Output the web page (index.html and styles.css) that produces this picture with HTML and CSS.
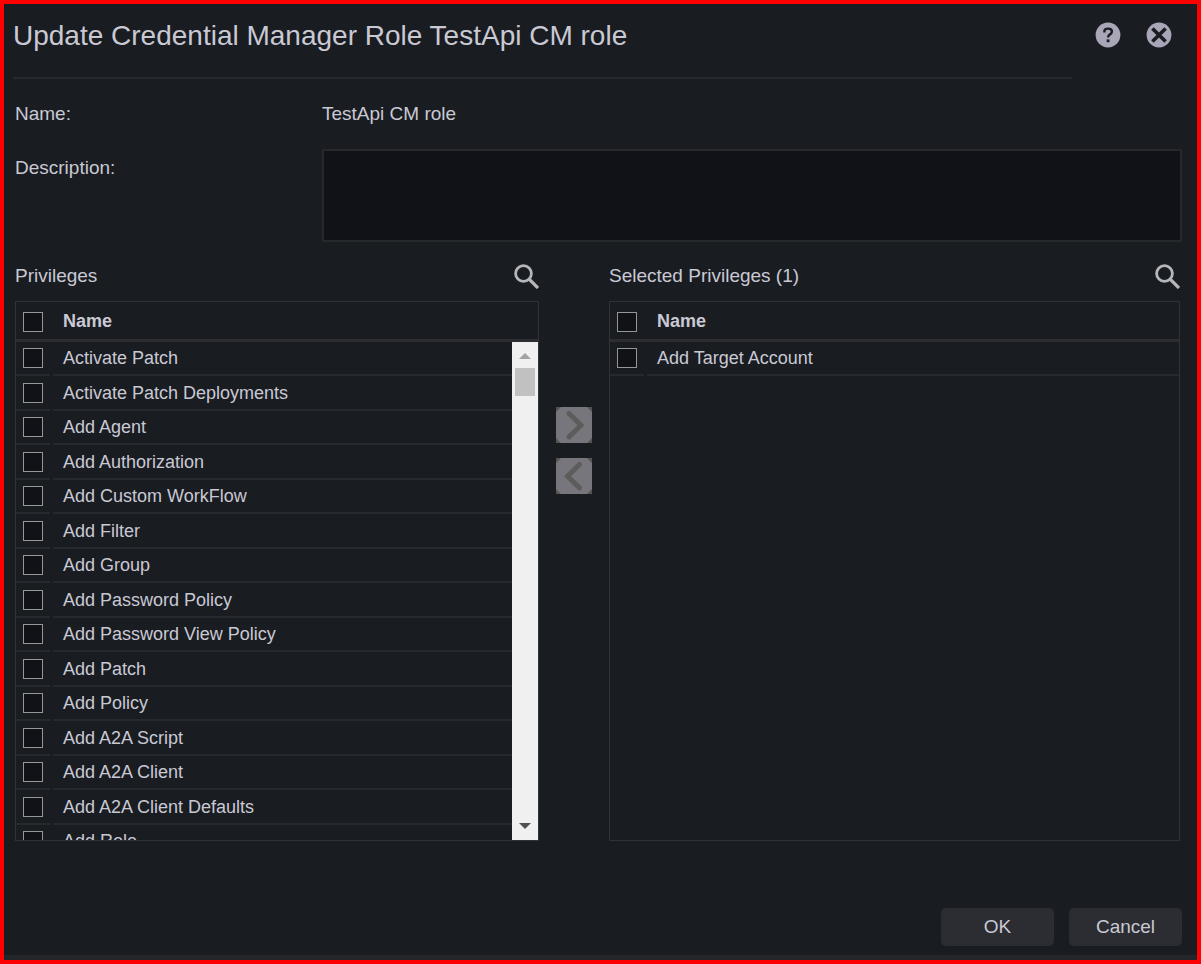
FILE: index.html
```html
<!DOCTYPE html>
<html lang="en">
<head>
<meta charset="utf-8">
<meta name="viewport" content="width=device-width, initial-scale=1">
<title>Update Credential Manager Role</title>
<link rel="stylesheet" href="styles.css">
</head>
<body>
<main class="dialog">
  <header class="dialog-header">
    <h1 class="title">Update Credential Manager Role TestApi CM role</h1>
    <div class="header-actions">
      <button class="icon-button" type="button" aria-label="Help">
        <svg width="26" height="26" viewBox="0 0 26 26"><circle cx="13" cy="13" r="12.4" fill="#a9a7b7"/><path d="M9.4 10.4V8.7Q9.8 6.6 13 6.6q3.9 0 3.9 3 0 1.8-1.9 2.8-1.9 1-1.9 3.1" fill="none" stroke="#191c21" stroke-width="2.4"/><rect x="11.7" y="17.4" width="2.8" height="2.8" fill="#191c21"/></svg>
      </button>
      <button class="icon-button" type="button" aria-label="Close">
        <svg width="26" height="26" viewBox="0 0 26 26"><circle cx="13" cy="13" r="12.4" fill="#a9a7b7"/><path d="M6.4 6.4l13.2 13.2M19.6 6.4L6.4 19.6" fill="none" stroke="#191c21" stroke-width="3.6"/></svg>
      </button>
    </div>
  </header>

  <form class="form">
    <div class="field">
      <span class="field-label">Name:</span>
      <span class="field-value">TestApi CM role</span>
    </div>
    <div class="field">
      <label class="field-label" for="description">Description:</label>
      <textarea class="description" id="description"></textarea>
    </div>

    <div class="picker">
      <section class="panel">
        <div class="panel-header">
          <h2 class="panel-title">Privileges</h2>
          <button class="icon-button" type="button" aria-label="Search privileges">
            <svg width="26" height="26" viewBox="0 0 26 26"><circle cx="10.5" cy="10.5" r="7.9" fill="none" stroke="#b5b6ba" stroke-width="2.8"/><path d="M16 16l9 9" fill="none" stroke="#b5b6ba" stroke-width="3.2"/></svg>
          </button>
        </div>
        <div class="grid">
          <table class="table">
            <thead class="table-head">
              <tr class="row"><th class="check-cell"><input class="check" type="checkbox" aria-label="Select all privileges"></th><th class="name-cell">Name</th></tr>
            </thead>
            <tbody class="table-body">
              <tr class="row"><td class="check-cell"><input class="check" type="checkbox" id="p1"></td><td class="name-cell"><label for="p1">Activate Patch</label></td></tr>
              <tr class="row"><td class="check-cell"><input class="check" type="checkbox" id="p2"></td><td class="name-cell"><label for="p2">Activate Patch Deployments</label></td></tr>
              <tr class="row"><td class="check-cell"><input class="check" type="checkbox" id="p3"></td><td class="name-cell"><label for="p3">Add Agent</label></td></tr>
              <tr class="row"><td class="check-cell"><input class="check" type="checkbox" id="p4"></td><td class="name-cell"><label for="p4">Add Authorization</label></td></tr>
              <tr class="row"><td class="check-cell"><input class="check" type="checkbox" id="p5"></td><td class="name-cell"><label for="p5">Add Custom WorkFlow</label></td></tr>
              <tr class="row"><td class="check-cell"><input class="check" type="checkbox" id="p6"></td><td class="name-cell"><label for="p6">Add Filter</label></td></tr>
              <tr class="row"><td class="check-cell"><input class="check" type="checkbox" id="p7"></td><td class="name-cell"><label for="p7">Add Group</label></td></tr>
              <tr class="row"><td class="check-cell"><input class="check" type="checkbox" id="p8"></td><td class="name-cell"><label for="p8">Add Password Policy</label></td></tr>
              <tr class="row"><td class="check-cell"><input class="check" type="checkbox" id="p9"></td><td class="name-cell"><label for="p9">Add Password View Policy</label></td></tr>
              <tr class="row"><td class="check-cell"><input class="check" type="checkbox" id="p10"></td><td class="name-cell"><label for="p10">Add Patch</label></td></tr>
              <tr class="row"><td class="check-cell"><input class="check" type="checkbox" id="p11"></td><td class="name-cell"><label for="p11">Add Policy</label></td></tr>
              <tr class="row"><td class="check-cell"><input class="check" type="checkbox" id="p12"></td><td class="name-cell"><label for="p12">Add A2A Script</label></td></tr>
              <tr class="row"><td class="check-cell"><input class="check" type="checkbox" id="p13"></td><td class="name-cell"><label for="p13">Add A2A Client</label></td></tr>
              <tr class="row"><td class="check-cell"><input class="check" type="checkbox" id="p14"></td><td class="name-cell"><label for="p14">Add A2A Client Defaults</label></td></tr>
              <tr class="row"><td class="check-cell"><input class="check" type="checkbox" id="p15"></td><td class="name-cell"><label for="p15">Add Role</label></td></tr>
            </tbody>
          </table>
          <div class="scrollbar" aria-hidden="true">
            <svg class="scroll-arrow" width="12" height="6" viewBox="0 0 12 6"><path d="M6 0l6 6H0z" fill="#a3a3a3"/></svg>
            <div class="scroll-track"><div class="scroll-thumb"></div></div>
            <svg class="scroll-arrow" width="12" height="6" viewBox="0 0 12 6"><path d="M0 0h12L6 6z" fill="#505050"/></svg>
          </div>
        </div>
      </section>

      <div class="movers">
        <button class="mover" type="button" aria-label="Add selected" disabled>
          <svg width="36" height="36" viewBox="0 0 36 36"><path d="M0 0h5L0 5zM36 0h-5l5 5zM0 36h5l-5-5zM36 36h-5l5-5z" fill="#55544f"/><path d="M13 6.5l12 11.7-12 11.7" fill="none" stroke="#5d5c5b" stroke-width="5" stroke-linecap="round"/></svg>
        </button>
        <button class="mover" type="button" aria-label="Remove selected" disabled>
          <svg width="36" height="36" viewBox="0 0 36 36"><path d="M0 0h5L0 5zM36 0h-5l5 5zM0 36h5l-5-5zM36 36h-5l5-5z" fill="#55544f"/><path d="M23.5 6.5l-12 11.7 12 11.7" fill="none" stroke="#5d5c5b" stroke-width="5" stroke-linecap="round"/></svg>
        </button>
      </div>

      <section class="panel panel-selected">
        <div class="panel-header">
          <h2 class="panel-title">Selected Privileges (1)</h2>
          <button class="icon-button" type="button" aria-label="Search selected privileges">
            <svg width="26" height="26" viewBox="0 0 26 26"><circle cx="10.5" cy="10.5" r="7.9" fill="none" stroke="#b5b6ba" stroke-width="2.8"/><path d="M16 16l9 9" fill="none" stroke="#b5b6ba" stroke-width="3.2"/></svg>
          </button>
        </div>
        <div class="grid">
          <table class="table">
            <thead class="table-head">
              <tr class="row"><th class="check-cell"><input class="check" type="checkbox" aria-label="Select all selected privileges"></th><th class="name-cell">Name</th></tr>
            </thead>
            <tbody class="table-body">
              <tr class="row"><td class="check-cell"><input class="check" type="checkbox" id="s1"></td><td class="name-cell"><label for="s1">Add Target Account</label></td></tr>
            </tbody>
          </table>
        </div>
      </section>
    </div>

    <footer class="actions">
      <button class="button" type="button">OK</button>
      <button class="button" type="button">Cancel</button>
    </footer>
  </form>
</main>
</body>
</html>
```
FILE: styles.css
```css
* { box-sizing: border-box; }

body {
  margin: 0;
  background: #191c21;
  color: #c9c9d4;
  font-family: "Liberation Sans", Arial, sans-serif;
  font-size: 19px;
  line-height: 24px;
}

.dialog {
  display: flex;
  flex-direction: column;
  min-height: 100vh;
  border: 4px solid #ff0000;
  box-shadow: inset 0 -5px #242528;
}

.dialog-header {
  display: flex;
  padding: 10px 20px 0 9px;
}

.title {
  flex: 1;
  height: 65px;
  margin: 0 20px 0 0;
  padding-top: 2px;
  border-bottom: 2px solid #26292d;
  font-size: 28px;
  font-weight: 400;
  line-height: 40px;
}

.header-actions {
  display: flex;
  gap: 25px;
  padding: 8px 5px 0 3px;
}

.icon-button {
  display: block;
  width: 26px;
  height: 26px;
  padding: 0;
  border: 0;
  background: none;
}

.icon-button svg, .mover svg { display: block; }

.form {
  flex: 1;
  display: flex;
  flex-direction: column;
  padding: 23px 15px 14px 11px;
}

.field {
  display: grid;
  grid-template-columns: 307px 1fr;
  margin-bottom: 23px;
}

.field + .field { margin-bottom: 20px; }

.field + .field .field-label { padding-top: 7px; }

.description {
  display: block;
  width: 100%;
  height: 93px;
  padding: 8px;
  border: 2px solid #26282c;
  background: #111217;
  color: inherit;
  font: inherit;
  resize: none;
}

.picker {
  flex: 1;
  display: flex;
}

.panel {
  flex: 524;
  min-width: 0;
  display: flex;
  flex-direction: column;
}

.panel-selected {
  flex: 571;
  margin-right: 2px;
}

.panel-header {
  display: flex;
  justify-content: space-between;
  align-items: center;
  height: 28px;
  margin-bottom: 11px;
}

.panel-title {
  margin: 0;
  font-size: 19px;
  font-weight: 400;
}

.grid {
  position: relative;
  flex: 1;
  min-height: 540px;
  border: 1px solid #303236;
}

.table {
  display: flex;
  flex-direction: column;
  position: absolute;
  inset: 0;
  font-size: 18px;
}

.table-head, .table-body { display: block; }

.table-head { border-bottom: 3px solid #2b2d31; }

.table-body {
  flex: 1;
  overflow-y: auto;
  scrollbar-width: none;
}

.row {
  display: flex;
  height: 34px;
}

.row:nth-child(even) { height: 35px; }

.table-head .row { height: 37px; }

.check-cell, .name-cell {
  display: flex;
  align-items: center;
  padding: 0;
  border-bottom: 2px solid #26292d;
}

.table-head .check-cell, .table-head .name-cell { border: 0; }

.check-cell {
  width: 34px;
  margin-right: 3px;
  padding-left: 7px;
}

.table-head .check-cell { padding-top: 3px; }

.name-cell {
  flex: 1;
  padding-left: 10px;
  text-align: left;
}

.check {
  appearance: none;
  width: 20px;
  height: 20px;
  margin: 0;
  border: 1px solid #969696;
  background: #111217;
}

.scrollbar {
  position: absolute;
  top: 40px;
  right: 0;
  bottom: 0;
  display: flex;
  flex-direction: column;
  align-items: center;
  width: 26px;
  padding: 11px 3px;
  background: #f0f0f0;
}

.scroll-track {
  flex: 1;
  width: 100%;
  padding-top: 9px;
}

.scroll-thumb {
  height: 28px;
  background: #c1c1c1;
}

.movers {
  display: flex;
  flex-direction: column;
  gap: 15px;
  padding: 145px 17px 0;
}

.mover {
  width: 36px;
  height: 36px;
  padding: 0;
  border: 0;
  background: #78767d;
}

.actions {
  display: flex;
  justify-content: flex-end;
  gap: 15px;
  margin-top: 67px;
}

.button {
  width: 113px;
  height: 38px;
  padding: 0;
  border: 0;
  border-radius: 5px;
  background: #2c2d32;
  color: inherit;
  font: inherit;
}
```
